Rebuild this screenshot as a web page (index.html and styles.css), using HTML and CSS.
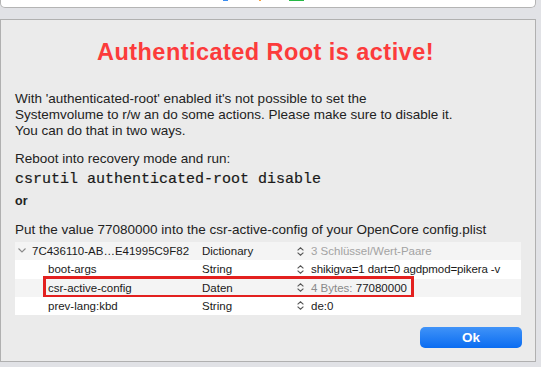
FILE: index.html
```html
<!DOCTYPE html>
<html>
<head>
<meta charset="utf-8">
<link rel="stylesheet" href="styles.css">
</head>
<body>
<div class="topbar">
  <span class="mark blue"></span>
  <span class="mark orange"></span>
  <span class="mark green"></span>
</div>
<div class="panel">
  <h1 class="title">Authenticated Root is active!</h1>
  <p class="para intro">With 'authenticated-root' enabled it's not possible to set the<br>Systemvolume to r/w an do some actions. Please make sure to disable it.<br>You can do that in two ways.</p>
  <p class="para step">Reboot into recovery mode and run:</p>
  <p class="cmd">csrutil authenticated-root disable</p>
  <p class="or">or</p>
  <p class="para put">Put the value 77080000 into the csr-active-config of your OpenCore config.plist</p>
  <div class="plist">
    <div class="row alt">
      <div class="key root"><svg class="disc" width="8" height="5" viewBox="0 0 8 5"><polyline points="0.5,0.5 4,4 7.5,0.5" fill="none" stroke="#8a8a8a" stroke-width="1.1"/></svg>7C436110-AB…E41995C9F82</div>
      <div class="type">Dictionary</div>
      <div class="val"><svg class="ud" width="7" height="9" viewBox="0 0 7 9"><polyline points="0.6,3.4 3.5,0.8 6.4,3.4" fill="none" stroke="#555" stroke-width="1.1"/><polyline points="0.6,5.6 3.5,8.2 6.4,5.6" fill="none" stroke="#555" stroke-width="1.1"/></svg><span class="light">3 Schlüssel/Wert-Paare</span></div>
    </div>
    <div class="row">
      <div class="key">boot-args</div>
      <div class="type">String</div>
      <div class="val"><svg class="ud" width="7" height="9" viewBox="0 0 7 9"><polyline points="0.6,3.4 3.5,0.8 6.4,3.4" fill="none" stroke="#555" stroke-width="1.1"/><polyline points="0.6,5.6 3.5,8.2 6.4,5.6" fill="none" stroke="#555" stroke-width="1.1"/></svg><span class="tight">shikigva=1 dart=0 agdpmod=pikera -v</span></div>
    </div>
    <div class="row alt">
      <div class="key">csr-active-config</div>
      <div class="type">Daten</div>
      <div class="val"><svg class="ud" width="7" height="9" viewBox="0 0 7 9"><polyline points="0.6,3.4 3.5,0.8 6.4,3.4" fill="none" stroke="#555" stroke-width="1.1"/><polyline points="0.6,5.6 3.5,8.2 6.4,5.6" fill="none" stroke="#555" stroke-width="1.1"/></svg><span class="muted">4 Bytes:</span>&nbsp;77080000</div>
      <div class="box"></div>
    </div>
    <div class="row">
      <div class="key">prev-lang:kbd</div>
      <div class="type">String</div>
      <div class="val"><svg class="ud" width="7" height="9" viewBox="0 0 7 9"><polyline points="0.6,3.4 3.5,0.8 6.4,3.4" fill="none" stroke="#555" stroke-width="1.1"/><polyline points="0.6,5.6 3.5,8.2 6.4,5.6" fill="none" stroke="#555" stroke-width="1.1"/></svg>de:0</div>
    </div>
  </div>
  <div class="actions"><button class="ok">Ok</button></div>
</div>
</body>
</html>
```
FILE: styles.css
```css
html, body {
  margin: 0;
  padding: 0;
  background: #e1e2e6;
  width: 541px;
  height: 367px;
  overflow: hidden;
  font-family: "Liberation Sans", Arial, sans-serif;
  color: #222;
}
.topbar {
  position: relative;
  width: 534px;
  height: 7px;
  background: #fff;
  border: 1px solid #b4b4b4;
  border-top: none;
  border-radius: 0 0 5px 5px;
}
.mark {
  position: absolute;
  top: 0;
  height: 1px;
}
.mark.blue { left: 222px; width: 5px; background: #3a8cf0; }
.mark.orange { left: 258px; width: 2px; background: #f5a040; }
.mark.green { left: 288px; width: 15px; background: #25b845; }
.panel {
  margin-top: 11px;
  width: 534px;
  height: 341px;
  background: #ebebeb;
  border: 1px solid #b0b0b0;
  display: flex;
  flex-direction: column;
}
.title {
  margin: 19px 0 0;
  padding-right: 5px;
  text-align: center;
  font-size: 23.5px;
  letter-spacing: 0.45px;
  font-weight: bold;
  color: #fc3b3b;
  line-height: 27px;
}
.para {
  margin: 0;
  padding-left: 14px;
  font-size: 13.5px;
  line-height: 16px;
  color: #222;
}
.intro { margin-top: 25px; }
.step { margin-top: 12px; }
.cmd {
  margin: 4px 0 0;
  padding-left: 14px;
  font-family: "Liberation Mono", "Courier New", monospace;
  font-size: 15px;
  line-height: 18px;
  color: #1a1a1a;
  -webkit-text-stroke: 0.2px #1a1a1a;
}
.or {
  margin: 5px 0 0;
  padding-left: 14px;
  font-size: 12.5px;
  line-height: 15px;
  font-weight: bold;
}
.put { margin-top: 13px; }
.plist {
  margin: 4px 0 0 14px;
  width: 506px;
  font-size: 11.5px;
  color: #1a1a1a;
}
.row {
  position: relative;
  display: grid;
  grid-template-columns: 187px 95px 1fr;
  height: 18.25px;
  align-items: center;
  background: #fff;
}
.row.alt { background: #f4f4f4; }
.key { padding-left: 33px; white-space: nowrap; }
.key.root { padding-left: 3px; }
.disc {
  margin-right: 6px;
  vertical-align: 2px;
}
.val { white-space: nowrap; display: flex; align-items: center; }
.ud {
  margin-right: 7px;
  flex: none;
}
.light { color: #a3a3a3; }
.muted { color: #8a8a8a; }
.tight { letter-spacing: -0.1px; }
.box {
  position: absolute;
  left: 28px;
  top: -3px;
  width: 365px;
  height: 16px;
  border: 3px solid #e3201f;
}
.actions {
  display: flex;
  justify-content: flex-end;
  padding: 0 13px 0 0;
  margin-top: 12px;
}
.ok {
  width: 102px;
  height: 21px;
  border: none;
  border-radius: 5px;
  background: linear-gradient(#4093f8, #0a6cf1);
  color: #fff;
  font-family: "Liberation Sans", Arial, sans-serif;
  font-size: 13.5px;
  font-weight: bold;
  padding: 0;
}
```
